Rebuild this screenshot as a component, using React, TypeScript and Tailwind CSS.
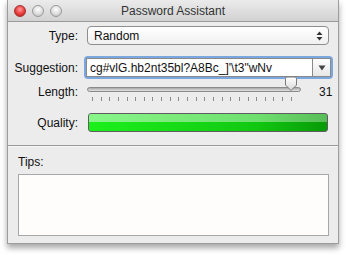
import React from "react";

const font = { fontFamily: '"Liberation Sans", Arial, sans-serif' };

function Light({ red }: { red?: boolean }) {
  return (
    <div
      className={`h-[12px] w-[12px] rounded-full border ${
        red
          ? "border-[#a23030] bg-[radial-gradient(circle_at_50%_35%,#ff9a9a_0%,#e83a3a_55%,#b81c1c_100%)]"
          : "border-[#9a9a9a] bg-[radial-gradient(circle_at_50%_35%,#ffffff_0%,#dcdcdc_55%,#b8b8b8_100%)]"
      }`}
    />
  );
}

function Label({ children }: { children: React.ReactNode }) {
  return <div className="w-[71px] shrink-0 pr-[1px] text-right text-[12px] text-[#111]">{children}</div>;
}

function Knob() {
  return (
    <svg width="14" height="16" viewBox="0 0 14 16" className="absolute left-[197px] top-[-6px]">
      <defs>
        <linearGradient id="kg" x1="0" y1="0" x2="0" y2="1">
          <stop offset="0" stopColor="#ffffff" />
          <stop offset="1" stopColor="#d8d8d8" />
        </linearGradient>
      </defs>
      <path d="M1.5 2.5 Q1.5 1 3 1 H11 Q12.5 1 12.5 2.5 V9 L7 14.5 L1.5 9 Z" fill="url(#kg)" stroke="#7a7a7a" strokeWidth="1" />
    </svg>
  );
}

export default function App() {
  const password = "cg#vlG.hb2nt35bl?A8Bc_]'\\t3\"wNv";
  return (
    <div className="h-[255px] w-[346px] bg-white pl-[7px]" style={font}>
      <div className="flex h-[244px] w-[332px] flex-col border-x border-b border-[#9d9d9d] bg-[#ececec] shadow-[0_4px_6px_rgba(0,0,0,0.35)]">
        {/* title bar */}
        <div className="relative flex h-[22px] shrink-0 items-center border-b border-[#9a9a9a] bg-[linear-gradient(#ebebeb,#d2d2d2)] pl-[6px]">
          <div className="flex gap-[6px]">
            <Light red />
            <Light />
            <Light />
          </div>
          <div className="absolute inset-0 flex items-center justify-center text-[12px] text-[#333]">Password Assistant</div>
        </div>

        {/* Type */}
        <div className="mt-[4px] flex items-center gap-[8px]">
          <Label>Type:</Label>
          <div className="flex h-[19px] w-[242px] items-center justify-between rounded-[4px] border border-[#8e8e8e] bg-[linear-gradient(#ffffff,#f0f0f0)] pl-[6px] pr-[5px] text-[12px] text-[#111]">
            <span>Random</span>
            <svg width="7" height="10" viewBox="0 0 7 10">
              <path d="M3.5 0.5 L6.5 4 H0.5 Z M3.5 9.5 L6.5 6 H0.5 Z" fill="#333" />
            </svg>
          </div>
        </div>

        {/* Suggestion */}
        <div className="mt-[13px] flex items-center gap-[7px]">
          <Label>Suggestion:</Label>
          <div className="flex h-[19px] w-[245px] rounded-[2px] shadow-[0_0_0_2px_#7aa7e0]">
            <div className="flex flex-1 items-center border border-[#8a8a8a] bg-white pl-[3px] text-[12px] text-[#111]">
              {password}
            </div>
            <div className="flex w-[18px] items-center justify-center border border-l-0 border-[#8a8a8a] bg-[linear-gradient(#ffffff,#e6e6e6)]">
              <svg width="8" height="6" viewBox="0 0 8 6">
                <path d="M0.5 0.5 H7.5 L4 5.5 Z" fill="#444" />
              </svg>
            </div>
          </div>
        </div>

        {/* Length */}
        <div className="mt-[5px] flex items-start gap-[8px]">
          <div className="pt-[1px]">
            <Label>Length:</Label>
          </div>
          <div className="relative h-[22px] w-[214px]">
            <div className="mt-[5px] h-[5px] w-[214px] rounded-full border border-[#8a8a8a] bg-[linear-gradient(#a8a8a8,#e2e2e2)]" />
            <Knob />
            <div className="mt-[5px] flex w-[205px] justify-between pl-[5px]">
              {Array.from({ length: 24 }).map((_, i) => (
                <div key={i} className="h-[4px] w-[1px] bg-[#8a8a8a]" />
              ))}
            </div>
          </div>
          <div className="ml-[10px] pt-[1px] text-[12px] text-[#111]">31</div>
        </div>

        {/* Quality */}
        <div className="mt-[9px] flex items-center gap-[9px]">
          <Label>Quality:</Label>
          <div className="h-[19px] w-[240px] overflow-hidden rounded-[3px] border border-[#5e5e5e] bg-[linear-gradient(90deg,#1cf01c,#11c811_70%,#089a08)]">
            <div className="h-[8px] bg-[linear-gradient(90deg,#88f588,#6fe06f_70%,#59bd59)]" />
          </div>
        </div>

        {/* separator */}
        <div className="mt-[13px] h-[1px] bg-[#9a9a9a]" />
        <div className="h-[1px] bg-[#f6f6f6]" />

        {/* Tips */}
        <div className="mt-[6px] pl-[10px] text-[12px] text-[#111]">Tips:</div>
        <div className="ml-[10px] mt-[3px] h-[62px] w-[311px] border border-[#a8a8a8] bg-[#fefdfb]" />
      </div>
    </div>
  );
}
